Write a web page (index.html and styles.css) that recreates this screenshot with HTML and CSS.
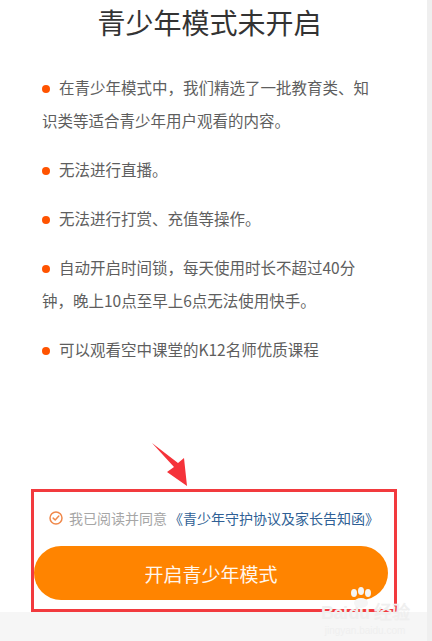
FILE: index.html
```html
<!DOCTYPE html>
<html lang="zh-CN">
<head>
    <meta charset="UTF-8">
    <meta name="viewport" content="width=device-width, initial-scale=1.0">
    <title>青少年模式</title>
    <link rel="stylesheet" href="styles.css">
</head>
<body>
    <div class="page">
        <h1 class="title">青少年模式未开启</h1>
        <div class="rules">
            <p><span class="dot"></span>在青少年模式中，我们精选了一批教育类、知识类等适合青少年用户观看的内容。</p>
            <p><span class="dot"></span>无法进行直播。</p>
            <p><span class="dot"></span>无法进行打赏、充值等操作。</p>
            <p><span class="dot"></span>自动开启时间锁，每天使用时长不超过40分钟，晚上10点至早上6点无法使用快手。</p>
            <p><span class="dot"></span>可以观看空中课堂的K12名师优质课程</p>
        </div>

        <div class="footer">
            <div class="mark">
                <div class="agree">
                    <svg class="check" width="14" height="14" viewBox="0 0 14 14">
                        <circle cx="7" cy="7" r="6" fill="none" stroke="#f0884a" stroke-width="1.5"/>
                        <path d="M4.2 7.1 L6.2 9 L9.8 5.1" fill="none" stroke="#f0884a" stroke-width="1.5" stroke-linecap="round" stroke-linejoin="round"/>
                    </svg>
                    <span class="agree-text">我已阅读并同意</span><span class="agree-link">《青少年守护协议及家长告知函》</span>
                </div>
                <button class="open-btn" type="button">开启青少年模式</button>
            </div>
            <div class="bottom-band"></div>
        </div>

        <!-- annotation arrow -->
        <svg class="arrow" width="45" height="50" viewBox="0 0 45 50">
            <polygon points="4,3 30,23 36,18 39,46 19,32 26,27" fill="#f5333a"/>
        </svg>

        <div class="watermark">
            <svg class="paw" width="30" height="22" viewBox="0 0 30 22">
                <ellipse cx="8" cy="6" rx="3" ry="4" fill="#f5f5f5"/>
                <ellipse cx="15" cy="4" rx="3" ry="4" fill="#f5f5f5"/>
                <ellipse cx="22" cy="6" rx="3" ry="4" fill="#f5f5f5"/>
                <ellipse cx="15" cy="16" rx="7" ry="5" fill="#f5f5f5"/>
            </svg>
            <div class="wm-big">Bai<span class="wm-du">du</span> 经验</div>
            <div class="wm-small">jingyan.baidu.com</div>
        </div>
    </div>
</body>
</html>
```

FILE: styles.css
```css
* {
    box-sizing: border-box;
}

html, body {
    margin: 0;
    padding: 0;
    background-color: #efefef;
}

body {
    font-family: "Noto Sans CJK SC", "Noto Sans", sans-serif;
}

.page {
    position: relative;
    width: 427px;
    height: 641px;
    background-color: #fff;
    display: flex;
    flex-direction: column;
    overflow: hidden;
}

.title {
    margin: 2px 0 0;
    height: 40px;
    line-height: 40px;
    text-align: center;
    font-size: 28px;
    font-weight: normal;
    color: #333;
    padding-right: 8px;
}

.rules {
    padding: 29px 57px 0 42px;
}

.rules p {
    margin: 0 0 16px;
    font-size: 15.5px;
    line-height: 33px;
    color: #5e5e5e;
}

.dot {
    display: inline-block;
    width: 8px;
    height: 8px;
    border-radius: 50%;
    background-color: #ff5300;
    margin-right: 9px;
    vertical-align: 1px;
}

.footer {
    margin-top: auto;
}

.mark {
    margin: 0 30px 0 31px;
    border: 3px solid #f23a3e;
    padding: 16px 6px 9px 0;
}

.agree {
    display: flex;
    align-items: center;
    justify-content: center;
    height: 20px;
    font-size: 14px;
    margin-left: 6px;
}

.check {
    margin-right: 6px;
}

.agree-text {
    color: #a6a6a6;
}

.agree-link {
    color: #2f5f95;
    margin-left: 2px;
}

.open-btn {
    display: block;
    width: 100%;
    height: 54px;
    margin-top: 18px;
    border: none;
    border-radius: 27px;
    background-color: #ff8400;
    color: #fff6ec;
    font-family: inherit;
    font-size: 19px;
    cursor: pointer;
}

.bottom-band {
    height: 29px;
    background-color: #f6f6f6;
}

.arrow {
    position: absolute;
    left: 148px;
    top: 440px;
}

.watermark {
    position: absolute;
    left: 315px;
    top: 587px;
    width: 100px;
    text-align: center;
    color: #efefef;
    pointer-events: none;
}

.paw {
    display: block;
    margin: 0 auto -6px;
    position: relative;
    left: -4px;
}

.wm-big {
    font-family: "Liberation Sans", sans-serif;
    font-size: 18px;
    font-weight: bold;
    line-height: 20px;
    letter-spacing: -0.5px;
}

.wm-du {
    margin-left: 1px;
}

.wm-small {
    font-family: "Liberation Sans", sans-serif;
    font-size: 10px;
    line-height: 14px;
    margin-top: 1px;
}
```
